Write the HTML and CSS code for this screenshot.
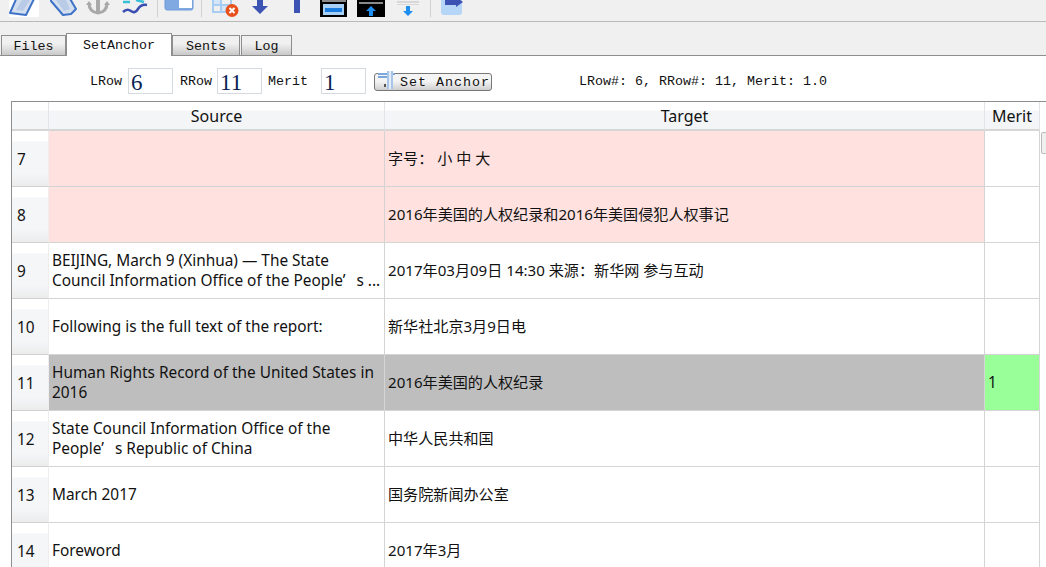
FILE: index.html
```html
<!DOCTYPE html>
<html lang="en">
<head>
  <meta charset="UTF-8">
  <title>SetAnchor</title>
  <link rel="stylesheet" href="styles.css">
</head>
<body>
  <div class="toolbar">
    <svg class="toolbar-icons" width="480" height="21" viewBox="0 0 480 21">
      <!-- book icons -->
      <rect x="9" y="0" width="30" height="17" fill="#fff"/>
      <path d="M17 -3 L35 -3 L26 15 L10 13 Z" fill="#d3deee" stroke="#3f73c8" stroke-width="2" stroke-linejoin="round"/>
      <path d="M22 0 L30 0 L23 11 L16 10 Z" fill="#b9cbe6"/>
      <path d="M51 -3 L69 -3 L76 9 L71 14 L63 15 L51 1 Z" fill="#d3deee" stroke="#3f73c8" stroke-width="2" stroke-linejoin="round"/>
      <path d="M56 0 L66 0 L70 9 L64 11 Z" fill="#b9cbe6"/>
      <!-- anchor -->
      <path d="M98 -2 V13" fill="none" stroke="#a9a9a9" stroke-width="4"/>
      <path d="M89 3 Q89 12 98 13 Q107 12 107 3" fill="none" stroke="#a9a9a9" stroke-width="3"/>
      <path d="M86 5 L89 1 L92 5 Z M104 5 L107 1 L110 5 Z" fill="#a9a9a9"/>
      <!-- waves -->
      <path d="M123 2 L130 2 M136 0 L144 2" fill="none" stroke="#35c0d8" stroke-width="2.500"/>
      <path d="M123 12 Q127 8 131 11 T138 9 T147 5" fill="none" stroke="#3a4db0" stroke-width="2.500"/>
      <line class="sep" x1="157.500" y1="0" x2="157.500" y2="17"/>
      <!-- window -->
      <rect x="165" y="-4" width="28" height="14" rx="2" fill="#7fa9e0" stroke="#6f9bdc"/>
      <rect x="179" y="-3" width="13" height="11" fill="#fff"/>
      <line class="sep" x1="201.500" y1="0" x2="201.500" y2="17"/>
      <!-- delete table row -->
      <rect x="213" y="0" width="7" height="4" fill="#d4e6f8"/>
      <rect x="222" y="6" width="6" height="5" fill="#d4e6f8"/>
      <path d="M213 0 V12 H229 M221 0 V12 M213 5 H232 M231 0 V5" fill="none" stroke="#a8cdf2" stroke-width="2"/>
      <circle cx="232" cy="10.500" r="6.500" fill="#e8501c"/>
      <path d="M229.500 8 L234.500 13 M234.500 8 L229.500 13" stroke="#fff" stroke-width="2"/>
      <!-- down, up -->
      <path d="M257 0 H263 V6 H268 L260 14 L252 6 H257 Z" fill="#3c53b4"/>
      <rect x="294" y="0" width="6" height="13" fill="#3c53b4"/>
      <!-- black icons -->
      <rect x="320" y="0" width="27" height="17" fill="#000"/>
      <rect x="322" y="0" width="24" height="2" fill="#8a8a8a"/>
      <rect x="323" y="4" width="21" height="11" fill="#a8d0f4"/>
      <rect x="325" y="8" width="17" height="4" fill="#1b7ce0"/>
      <rect x="357" y="0" width="28" height="17" fill="#000"/>
      <rect x="359" y="2" width="24" height="2" fill="#8a8a8a"/>
      <path d="M371 6 L376 11 H373 V16 H369 V11 H366 Z" fill="#1e8ef0"/>
      <!-- pale arrow -->
      <rect x="397" y="1" width="22" height="2" fill="#d8d8d8"/>
      <rect x="397" y="4" width="22" height="1" fill="#d8d8d8"/>
      <path d="M406 6 H410 V11 H413 L408 16 L403 11 H406 Z" fill="#1e8ef0"/>
      <line class="sep" x1="430.500" y1="0" x2="430.500" y2="17"/>
      <!-- export -->
      <path d="M441 0 H462 V12 Q462 15 459 15 H444 Q441 15 441 12 Z" fill="#b5d6f7"/>
      <path d="M445 0 H456 V-3 L463 2 L456 7 V5 H445 Z" fill="#3c53b4"/>
    </svg>
  </div>

  <div class="tabs">
    <div class="tab">Files</div>
    <div class="tab tab-active">SetAnchor</div>
    <div class="tab tab-sents">Sents</div>
    <div class="tab tab-log">Log</div>
  </div>

  <div class="anchor-form">
    <label class="field-label">LRow</label>
    <div class="num-input input-l">6</div>
    <label class="field-label label-r">RRow</label>
    <div class="num-input input-r">11</div>
    <label class="field-label">Merit</label>
    <div class="num-input input-m">1</div>
    <button class="anchor-btn">
      <svg width="22" height="20" viewBox="0 0 22 20">
        <path d="M3 3 H20 M3 6 H12" stroke="#7ba7dc" stroke-width="2" fill="none"/>
        <rect x="12" y="0" width="6" height="18" fill="#a9c5e8"/>
        <rect x="14" y="0" width="2" height="18" fill="#e4edf8"/>
        <rect x="9" y="13" width="2" height="3" fill="#555"/>
      </svg>
      <span>Set Anchor</span>
    </button>
    <div class="status">LRow#: 6, RRow#: 11, Merit: 1.0</div>
  </div>

  <div class="table-wrap">
    <div class="grid">
      <div class="head corner"></div>
      <div class="head">Source</div>
      <div class="head">Target</div>
      <div class="head">Merit</div>

      <div class="row-num">7</div>
      <div class="cell pink"></div>
      <div class="cell pink cjk">字号： 小 中 大</div>
      <div class="cell"></div>

      <div class="row-num">8</div>
      <div class="cell pink"></div>
      <div class="cell pink cjk">2016年美国的人权纪录和2016年美国侵犯人权事记</div>
      <div class="cell"></div>

      <div class="row-num">9</div>
      <div class="cell"><span>BEIJING, March 9 (Xinhua) — The State<br>Council Information Office of the People<span class="wide-quote">’</span>s ...</span></div>
      <div class="cell cjk">2017年03月09日 14:30 来源：新华网 参与互动</div>
      <div class="cell"></div>

      <div class="row-num">10</div>
      <div class="cell">Following is the full text of the report:</div>
      <div class="cell cjk">新华社北京3月9日电</div>
      <div class="cell"></div>

      <div class="row-num">11</div>
      <div class="cell grey">Human Rights Record of the United States in 2016</div>
      <div class="cell grey cjk">2016年美国的人权纪录</div>
      <div class="cell green">1</div>

      <div class="row-num">12</div>
      <div class="cell"><span>State Council Information Office of the<br>People<span class="wide-quote">’</span>s Republic of China</span></div>
      <div class="cell cjk">中华人民共和国</div>
      <div class="cell"></div>

      <div class="row-num">13</div>
      <div class="cell">March 2017</div>
      <div class="cell cjk">国务院新闻办公室</div>
      <div class="cell"></div>

      <div class="row-num">14</div>
      <div class="cell">Foreword</div>
      <div class="cell cjk">2017年3月</div>
      <div class="cell"></div>
    </div>
    <div class="scroll-thumb"></div>
  </div>
</body>
</html>
```

FILE: styles.css
```css
html,
body {
  height: 567px;
  overflow: hidden;
}

body {
  margin: 0;
  background-color: #fff;
  font-family: "Liberation Mono", "Noto Sans CJK SC", monospace;
  color: #111;
}

.toolbar {
  height: 21px;
  background-color: #f0f0f0;
  border-bottom: 1px solid #b9b9b9;
}

.toolbar-icons {
  display: block;
}

.sep {
  stroke: #d0d0d0;
}

.tabs {
  display: flex;
  height: 33px;
  padding-left: 1px;
  align-items: flex-end;
  background-color: #f0f0f0;
  border-bottom: 1px solid #8e8e8e;
}

.tab {
  box-sizing: border-box;
  height: 20px;
  width: 65px;
  border: 1px solid #8e8e8e;
  border-bottom: none;
  background: linear-gradient(#f0f0f0, #f0f0f0 40%, #c9c9c9);
  font-size: 13.33px;
  line-height: 22px;
  text-align: center;
}

.tab-active {
  height: 23px;
  width: 106px;
  margin-bottom: -1px;
  background: #fff;
  line-height: 23px;
}

.tab-sents {
  width: 68px;
}

.tab-log {
  width: 51px;
  margin-left: 1px;
}

.anchor-form {
  box-sizing: border-box;
  display: flex;
  align-items: flex-start;
  height: 45px;
  padding: 12px 0 0 90px;
  font-size: 13.33px;
  line-height: 28px;
}

.field-label {
  width: 38px;
}

.label-r {
  width: 37px;
}

.num-input {
  box-sizing: border-box;
  height: 26px;
  padding-left: 2px;
  border: 1px solid #d5d9e0;
  font-family: "Liberation Serif", serif;
  font-size: 23px;
  line-height: 27px;
  color: #0b1f55;
}

.input-l {
  width: 45px;
  margin-right: 7px;
}

.input-r {
  width: 45px;
  margin-right: 6px;
}

.input-m {
  width: 45px;
  margin-left: 15px;
  margin-right: 8px;
}

.anchor-btn {
  display: flex;
  align-items: center;
  gap: 3px;
  box-sizing: border-box;
  width: 118px;
  height: 18px;
  margin-top: 5px;
  padding: 0;
  border: 1px solid #777;
  border-radius: 3px;
  background: linear-gradient(#f4f4f4, #f4f4f4 45%, #cfcfcf);
  font-family: inherit;
  font-size: 13.33px;
  letter-spacing: 1px;
  color: #111;
}

.anchor-btn svg {
  margin-top: -2px;
  flex: none;
}

.status {
  margin-left: 87px;
}

.table-wrap {
  position: relative;
  margin-left: 11px;
  border-top: 1px solid #8e8e8e;
  border-left: 1px solid #8e8e8e;
}

.grid {
  display: grid;
  grid-template-columns: 37px 336px 600px 55px;
  grid-template-rows: 29px;
  grid-auto-rows: 56px;
  font-family: "Noto Sans", "Noto Sans CJK SC", sans-serif;
  font-size: 15.4px;
  line-height: 20px;
}

.head {
  box-sizing: border-box;
  height: 29px;
  padding-top: 4px;
  background: linear-gradient(#fff, #fff 31%, #f4f5f7 32%, #f4f5f7);
  border-right: 1px solid #e2e4e8;
  border-bottom: 2px solid #d6d6d6;
  font-size: 16px;
  text-align: center;
}

.row-num {
  box-sizing: border-box;
  display: flex;
  align-items: center;
  padding: 2px 0 0 5px;
  background: linear-gradient(#fff, #fff 10px, #f5f6f8 11px, #f5f6f8 75%, #ececec);
  border-bottom: 1px solid #d2d2d2;
  border-right: 1px solid #eee;
}

.cell {
  box-sizing: border-box;
  display: flex;
  align-items: center;
  padding: 1px 0 0 3px;
  border-right: 1px solid #d4d4d4;
  border-bottom: 1px solid #d4d4d4;
}

.cjk {
  padding: 0 0 2px 3px;
  font-size: 15.1px;
}

.wide-quote {
  padding-right: 11px;
}

.pink {
  background-color: #ffe2df;
}

.grey {
  background-color: #bebebe;
}

.green {
  background-color: #99ff99;
}

.scroll-thumb {
  position: absolute;
  left: 1029px;
  top: 30px;
  width: 8px;
  height: 20px;
  border: 1px solid #bbb;
  border-radius: 2px;
  background-color: #f0f0f0;
}
```
